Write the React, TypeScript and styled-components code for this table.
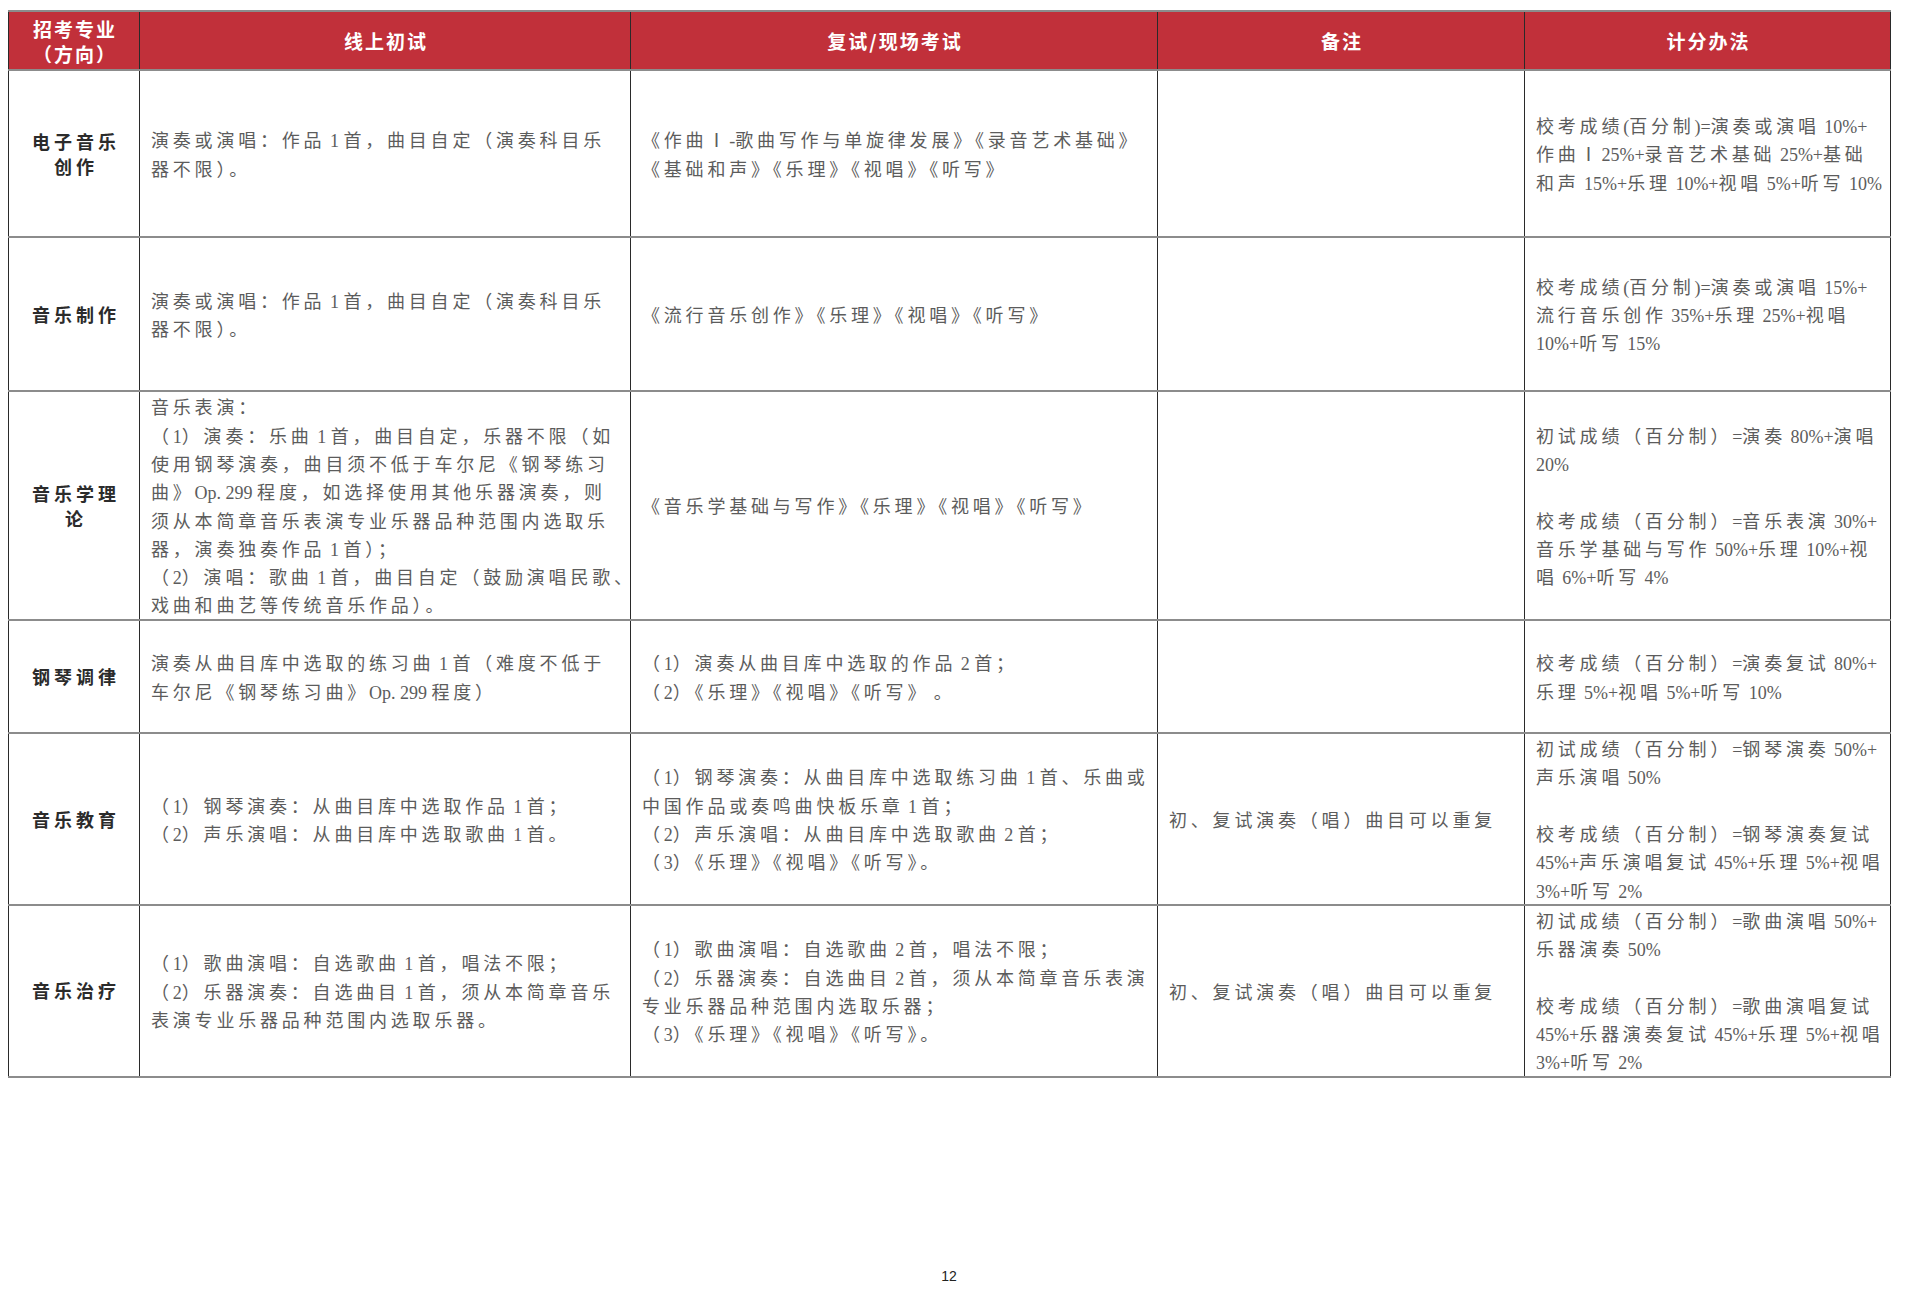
import React from "react";
import styled, { createGlobalStyle } from "styled-components";

// colours
const red = "#c1303a";
const ruleGray = "#8c8c8c";
const ruleDark = "#2a2a2a";
const bodyText = "#5c5c5c";
const labelText = "#2b2b2b";

const cjk = `"Noto Sans CJK SC", "Noto Sans", sans-serif`;

interface IRow {
  height: number;
  label: string[];
  online: string[];
  onsite: string[];
  note: string[];
  scoring: string[];
}

const rows: IRow[] = [
  {
    height: 167,
    label: ["电子音乐", "创作"],
    online: ["演奏或演唱：作品 1 首，曲目自定（演奏科目乐", "器不限）。"],
    onsite: [
      "《作曲Ⅰ-歌曲写作与单旋律发展》《录音艺术基础》",
      "《基础和声》《乐理》《视唱》《听写》",
    ],
    note: [],
    scoring: [
      "校考成绩(百分制)=演奏或演唱 10%+",
      "作曲Ⅰ25%+录音艺术基础 25%+基础",
      "和声 15%+乐理 10%+视唱 5%+听写 10%",
    ],
  },
  {
    height: 154,
    label: ["音乐制作"],
    online: ["演奏或演唱：作品 1 首，曲目自定（演奏科目乐", "器不限）。"],
    onsite: ["《流行音乐创作》《乐理》《视唱》《听写》"],
    note: [],
    scoring: [
      "校考成绩(百分制)=演奏或演唱 15%+",
      "流行音乐创作 35%+乐理 25%+视唱",
      "10%+听写 15%",
    ],
  },
  {
    height: 229,
    label: ["音乐学理", "论"],
    online: [
      "音乐表演：",
      "（1）演奏：乐曲 1 首，曲目自定，乐器不限（如",
      "使用钢琴演奏，曲目须不低于车尔尼《钢琴练习",
      "曲》Op. 299 程度，如选择使用其他乐器演奏，则",
      "须从本简章音乐表演专业乐器品种范围内选取乐",
      "器，演奏独奏作品 1 首）；",
      "（2）演唱：歌曲 1 首，曲目自定（鼓励演唱民歌、",
      "戏曲和曲艺等传统音乐作品）。",
    ],
    onsite: ["《音乐学基础与写作》《乐理》《视唱》《听写》"],
    note: [],
    scoring: [
      "初试成绩（百分制）=演奏 80%+演唱",
      "20%",
      "",
      "校考成绩（百分制）=音乐表演 30%+",
      "音乐学基础与写作 50%+乐理 10%+视",
      "唱 6%+听写 4%",
    ],
  },
  {
    height: 113,
    label: ["钢琴调律"],
    online: [
      "演奏从曲目库中选取的练习曲 1 首（难度不低于",
      "车尔尼《钢琴练习曲》Op. 299 程度）",
    ],
    onsite: ["（1）演奏从曲目库中选取的作品 2 首；", "（2）《乐理》《视唱》《听写》 。"],
    note: [],
    scoring: ["校考成绩（百分制）=演奏复试 80%+", "乐理 5%+视唱 5%+听写 10%"],
  },
  {
    height: 172,
    label: ["音乐教育"],
    online: ["（1）钢琴演奏：从曲目库中选取作品 1 首；", "（2）声乐演唱：从曲目库中选取歌曲 1 首。"],
    onsite: [
      "（1）钢琴演奏：从曲目库中选取练习曲 1 首、乐曲或",
      "中国作品或奏鸣曲快板乐章 1 首；",
      "（2）声乐演唱：从曲目库中选取歌曲 2 首；",
      "（3）《乐理》《视唱》《听写》。",
    ],
    note: ["初、复试演奏（唱）曲目可以重复"],
    scoring: [
      "初试成绩（百分制）=钢琴演奏 50%+",
      "声乐演唱 50%",
      "",
      "校考成绩（百分制）=钢琴演奏复试",
      "45%+声乐演唱复试 45%+乐理 5%+视唱",
      "3%+听写 2%",
    ],
  },
  {
    height: 171,
    label: ["音乐治疗"],
    online: [
      "（1）歌曲演唱：自选歌曲 1 首，唱法不限；",
      "（2）乐器演奏：自选曲目 1 首，须从本简章音乐",
      "表演专业乐器品种范围内选取乐器。",
    ],
    onsite: [
      "（1）歌曲演唱：自选歌曲 2 首，唱法不限；",
      "（2）乐器演奏：自选曲目 2 首，须从本简章音乐表演",
      "专业乐器品种范围内选取乐器；",
      "（3）《乐理》《视唱》《听写》。",
    ],
    note: ["初、复试演奏（唱）曲目可以重复"],
    scoring: [
      "初试成绩（百分制）=歌曲演唱 50%+",
      "乐器演奏 50%",
      "",
      "校考成绩（百分制）=歌曲演唱复试",
      "45%+乐器演奏复试 45%+乐理 5%+视唱",
      "3%+听写 2%",
    ],
  },
];

const columns = [131, 491, 527, 367, 366];

// latin runs (digits, %, +) are set in a Times-like face without the wide tracking
const splitRuns = (text: string) =>
  text.split(/([\x20-\x7E]+)/).map((part, i) =>
    /^[\x20-\x7E]+$/.test(part) ? <Latin key={i}>{part}</Latin> : part
  );

const Lines = ({ lines }: { lines: string[] }) => (
  <>
    {lines.map((line, i) => (
      <Line key={i}>{line === "" ? "\u00a0" : splitRuns(line)}</Line>
    ))}
  </>
);

const App = () => {
  return (
    <>
      <GlobalStyle />
      <Page>
        <Sheet>
          <colgroup>
            {columns.map((w, i) => (
              <col key={i} style={{ width: w }} />
            ))}
          </colgroup>
          <thead>
            <Row $h={59}>
              <HeadCell>
                <HeadLine>招考专业</HeadLine>
                <HeadLine>（方向）</HeadLine>
              </HeadCell>
              <HeadCell>线上初试</HeadCell>
              <HeadCell>复试/现场考试</HeadCell>
              <HeadCell>备注</HeadCell>
              <HeadCell>计分办法</HeadCell>
            </Row>
          </thead>
          <tbody>
            {rows.map((r, i) => (
              <Row $h={r.height} key={i}>
                <Label>
                  {r.label.map((l, j) => (
                    <div key={j}>{l}</div>
                  ))}
                </Label>
                <Cell>
                  <Lines lines={r.online} />
                </Cell>
                <Cell>
                  <Lines lines={r.onsite} />
                </Cell>
                <Cell>
                  <Lines lines={r.note} />
                </Cell>
                <Cell $pad={11}>
                  <Lines lines={r.scoring} />
                </Cell>
              </Row>
            ))}
          </tbody>
        </Sheet>
        <PageNumber>12</PageNumber>
      </Page>
    </>
  );
};

const GlobalStyle = createGlobalStyle`
  html, body {
    margin: 0;
    background: #ffffff;
  }
  body {
    font-family: ${cjk};
  }
`;

const Page = styled.div`
  padding: 10px 0 0 8px;
  width: 1882px;
`;

const Sheet = styled.table`
  table-layout: fixed;
  width: 1882px;
  border-collapse: collapse;
`;

const Row = styled.tr<{ $h: number }>`
  height: ${(p) => p.$h}px;
`;

const baseCell = `
  border-left: 1px solid ${ruleDark};
  border-right: 1px solid ${ruleDark};
  border-top: 2px solid ${ruleGray};
  border-bottom: 2px solid ${ruleGray};
  vertical-align: middle;
  box-sizing: border-box;
`;

const HeadCell = styled.th`
  ${baseCell}
  background: ${red};
  color: #ffffff;
  font-family: ${cjk};
  font-weight: 700;
  font-size: 19px;
  letter-spacing: 2px;
  line-height: 25px;
  text-align: center;
  padding: 0 0 0 2px;
`;

const HeadLine = styled.div`
  white-space: nowrap;
`;

const Label = styled.td`
  ${baseCell}
  color: ${labelText};
  font-family: ${cjk};
  font-weight: 700;
  font-size: 18px;
  letter-spacing: 4px;
  line-height: 25px;
  text-align: center;
  padding: 0 0 0 4px;
`;

const Cell = styled.td<{ $pad?: number }>`
  ${baseCell}
  color: ${bodyText};
  font-family: ${cjk};
  font-size: 18px;
  letter-spacing: 3.8px;
  line-height: 28.3px;
  padding: 0 0 0 ${(p) => p.$pad ?? 11}px;
`;

const Line = styled.div`
  white-space: pre;
  height: 28.3px;
`;

const Latin = styled.span`
  font-family: "Liberation Serif", "Times New Roman", serif;
  letter-spacing: 0;
  line-height: 1;
`;

const PageNumber = styled.div`
  margin-top: 190px;
  text-align: center;
  font-family: "Liberation Sans", Arial, sans-serif;
  font-size: 14px;
  line-height: 16px;
  color: #222222;
`;

export default App;
